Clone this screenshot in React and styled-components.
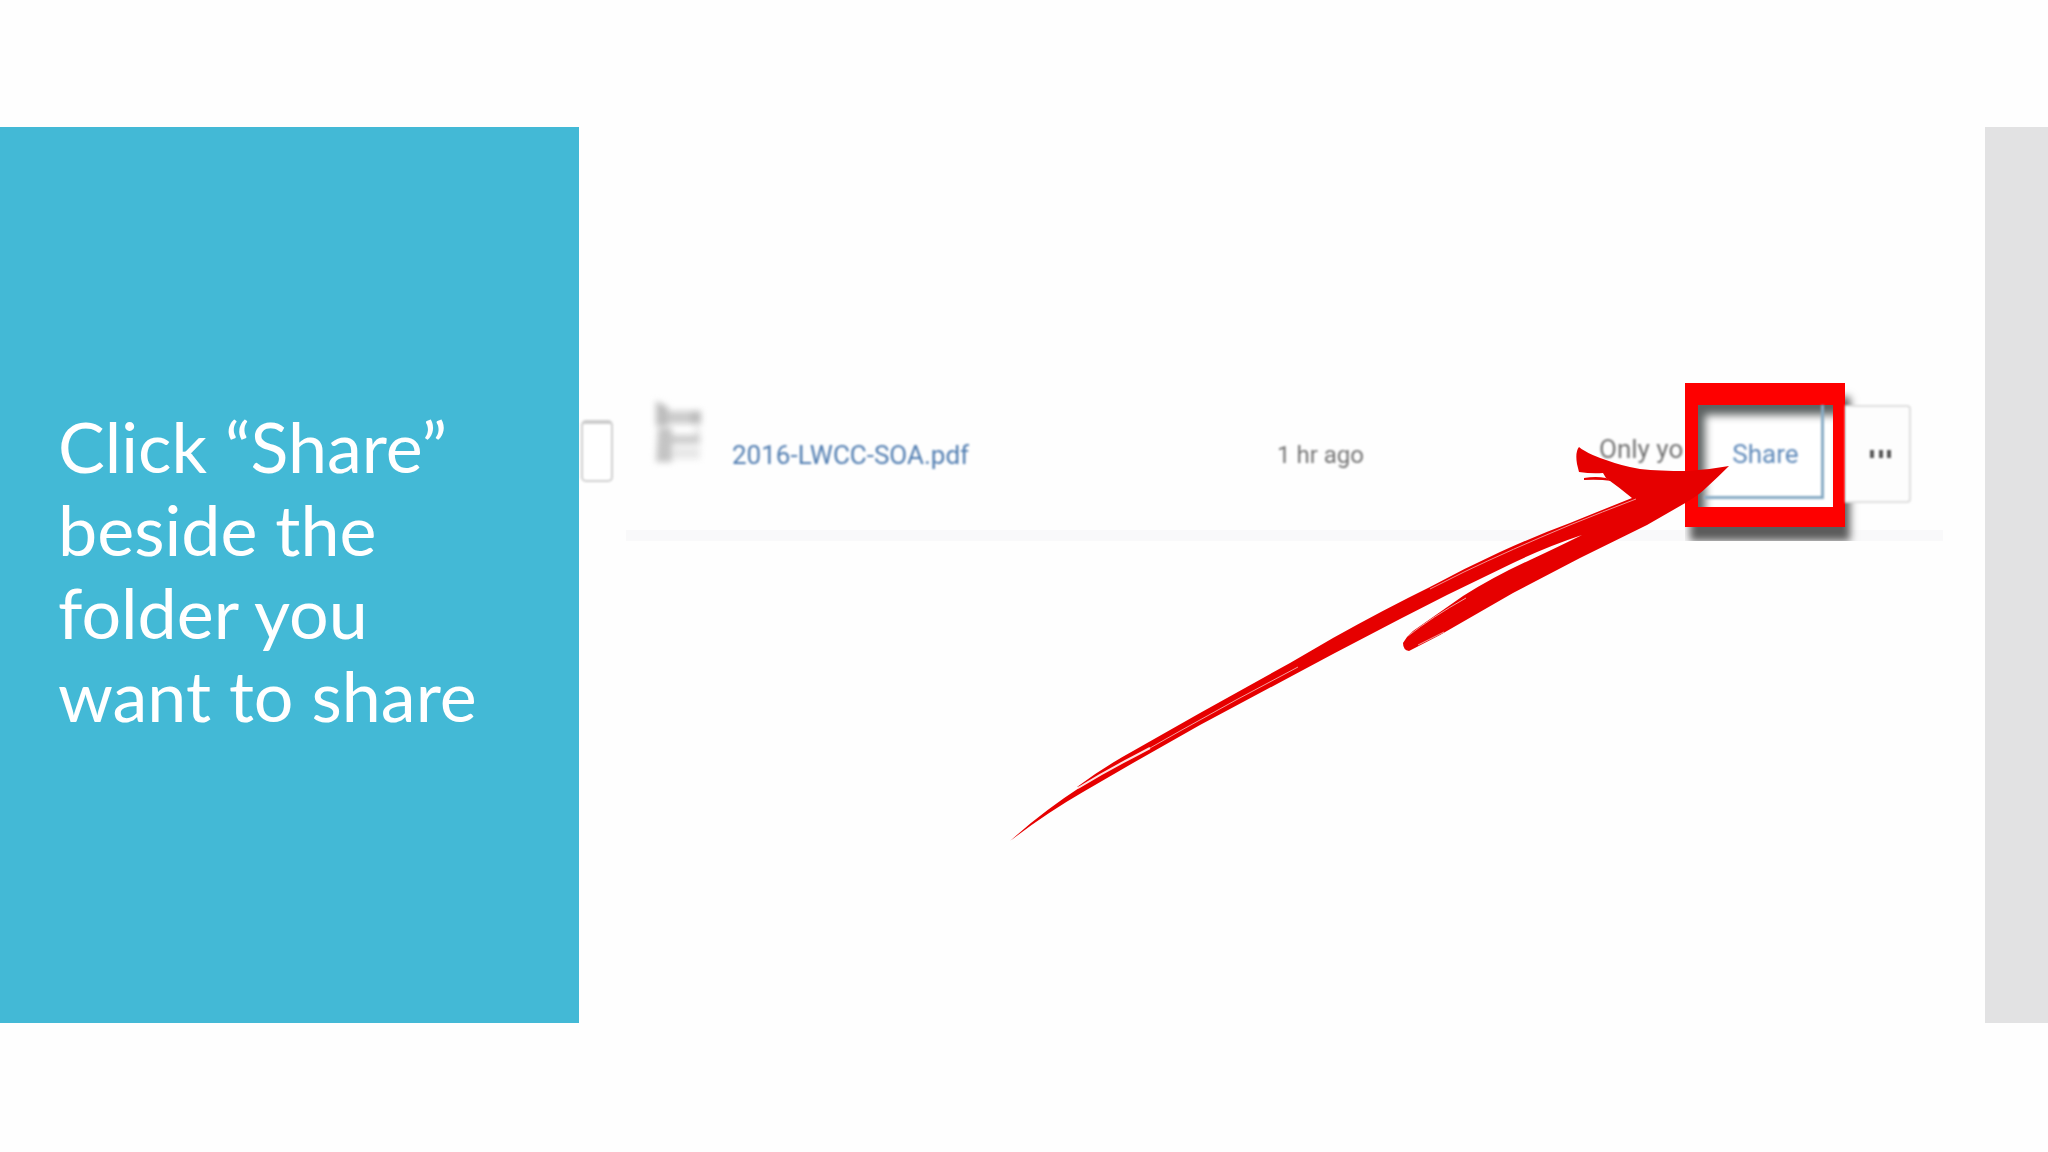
import React from "react";
import styled, { createGlobalStyle } from "styled-components";

const GlobalStyle = createGlobalStyle`
  *, *::before, *::after { box-sizing: border-box; }
  body { margin: 0; background: #fefefe; }
`;

const Slide = styled.div`
  display: grid;
  grid-template-columns: 579fr 1406fr 63fr;
  min-height: 100vh;
  padding: 127px 0 129px;
  overflow: hidden;
`;

const TitlePanel = styled.header`
  display: flex;
  align-items: center;
  padding: 0 58px 8px;
  background: #43b9d6;
`;

const Title = styled.h1`
  margin: 0;
  color: #ffffff;
  font: 400 70px/83px Lato, "Open Sans", sans-serif;
`;

const Content = styled.main`
  min-width: 0;
  padding: 256px 42px 0 2px;
`;

const EdgeBar = styled.aside`
  background: #e2e2e3;
`;

const FileRow = styled.div`
  position: relative;
  display: grid;
  grid-template-columns: 74px 77px 545fr 322fr 86px 160px 66px;
  align-items: center;
  height: 158px;
  padding: 0 32px 18px 0;
  font: 400 26px/40px Roboto, "Liberation Sans", sans-serif;
  white-space: nowrap;
`;

const Divider = styled.hr`
  position: absolute;
  inset: auto 0 0 45px;
  height: 11px;
  margin: 0;
  border: 0;
  background: #f9f9fa;
`;

const Tick = styled.input`
  appearance: none;
  width: 32px;
  height: 62px;
  margin: 0 0 8px;
  border: 2px solid #cfcfcf;
  border-top: 4px solid #cdcdcd;
  border-radius: 5px;
  background: #ffffff;
  filter: blur(1px);
`;

const FileIcon = styled.svg`
  width: 48px;
  height: 64px;
  margin-bottom: 44px;
  filter: blur(3px);
`;

const FileLink = styled.a`
  color: #4f7cb0;
  text-decoration: none;
  filter: blur(1px);
`;

const Cell = styled.span`
  padding-bottom: ${(p) => (p.$raised ? 12 : 0)}px;
  color: #747474;
  font-size: ${(p) => (p.$small ? 24 : 26)}px;
  filter: blur(1px);
`;

const Highlight = styled.div`
  position: relative;
  align-self: start;
  height: 144px;
  padding: 22px 12px 20px 13px;
  background: #fe0000;
  box-shadow: 5px 14px 8px #5c5c5c;
  clip-path: inset(0 -16px -14px 0);
`;

const ShareWell = styled.div`
  height: 100%;
  padding: 0 9px 8px 6px;
  background: #ffffff;
  box-shadow: inset 7px 10px 9px #5c6262;
`;

const ShareButton = styled.button`
  width: 100%;
  height: 100%;
  padding: 6px 0 0 6px;
  border: 0 solid #86aac4;
  border-width: 0 3px 3px 0;
  background: transparent;
  color: #5f8aba;
  font: inherit;
  filter: blur(1px);
`;

const MoreButton = styled.button`
  align-self: start;
  height: 98px;
  margin-top: 22px;
  padding: 0 0 0 6px;
  border: 2px solid #dedede;
  border-left: 0;
  border-radius: 0 4px 4px 0;
  background: #fdfdfd;
  filter: blur(1px);
`;

const Dots = styled.svg`
  display: block;
  width: 26px;
  height: 12px;
  margin: 0 auto;
`;

const Arrow = styled.svg`
  position: absolute;
  top: 57px;
  right: 203px;
  width: 740px;
  height: 410px;
  pointer-events: none;
`;

export default function App() {
  return (
    <>
      <GlobalStyle />
      <Slide>
        <TitlePanel>
          <Title>
            Click “Share”
            <br />
            beside the
            <br />
            folder you
            <br />
            want to share
          </Title>
        </TitlePanel>
        <Content>
          <FileRow>
            <Divider />
            <Tick type="checkbox" aria-label="Select 2016-LWCC-SOA.pdf" />
            <FileIcon viewBox="0 0 48 64" aria-hidden="true">
              <path d="M1 0l12 6v19H1z" fill="#bdbdbd" />
              <path d="M13 10h33v13H13z" fill="#cccccc" />
              <path d="M36 10h10v13H36z" fill="#bcbcbc" />
              <path d="M3 27h14v34H1z" fill="#c4c4c4" />
              <path d="M17 34h28v9H17z" fill="#cccccc" />
              <path d="M18 46h27v12H18zM39 26h6v8h-6z" fill="#e8e8e8" />
            </FileIcon>
            <div>
              <FileLink href="#file">2016-LWCC-SOA.pdf</FileLink>
            </div>
            <Cell $small>1 hr ago</Cell>
            <Cell $raised>Only yo</Cell>
            <Highlight>
              <ShareWell>
                <ShareButton type="button">Share</ShareButton>
              </ShareWell>
            </Highlight>
            <MoreButton type="button" aria-label="More options">
              <Dots viewBox="0 0 26 12" aria-hidden="true">
                <path d="M3 2h4v8H3zM12 2h4v8h-4zM20 2h4v8h-4z" fill="#555555" />
              </Dots>
            </MoreButton>
            <Arrow viewBox="1000 440 740 410" aria-hidden="true">
              <path
                fill="#e60000"
                d="M1729 466Q1708 470 1686 471Q1660 471 1640 469Q1622 466 1606 460Q1591 455 1585 451Q1581 449 1579 447Q1575 452 1577 464L1579 472Q1592 474 1603 473L1606 478Q1620 488 1632 498Q1602 510 1570 523Q1535 536 1500 552Q1465 568 1430 587Q1385 609 1333 638L1290 663L1200 713L1133 751Q1102 768 1077 787L1082 786Q1042 812 1010 841Q1045 814 1083 792L1133 763L1200 725L1290 677L1333 654L1400 619L1447 595L1513 563Q1546 547 1582 535Q1560 546 1530 560Q1495 576 1463 596L1413 631Q1407 636 1403 643Q1403 650 1409 651L1440 635L1513 593L1580 558L1647 525L1687 502Q1699 495 1707 487Q1718 477 1729 466Z"
              />
              <path d="M1584 478q12-2 22 0l6 3q-14-2-28-1z" fill="#e60000" />
              <path
                fill="none"
                stroke="#f58c8c"
                strokeWidth="1"
                d="M1636 499Q1602 512 1570 525Q1510 550 1464 572L1430 589"
              />
              <path
                fill="none"
                stroke="#ffe0e0"
                strokeWidth="2"
                d="M1078 788Q1104 772 1133 757L1150 748"
              />
              <path
                fill="none"
                stroke="#f59a9a"
                strokeWidth="1"
                d="M1150 748L1180 731L1236 700L1298 667M1408 636Q1432 617 1466 598M1418 645L1444 632"
              />
            </Arrow>
          </FileRow>
        </Content>
        <EdgeBar />
      </Slide>
    </>
  );
}
